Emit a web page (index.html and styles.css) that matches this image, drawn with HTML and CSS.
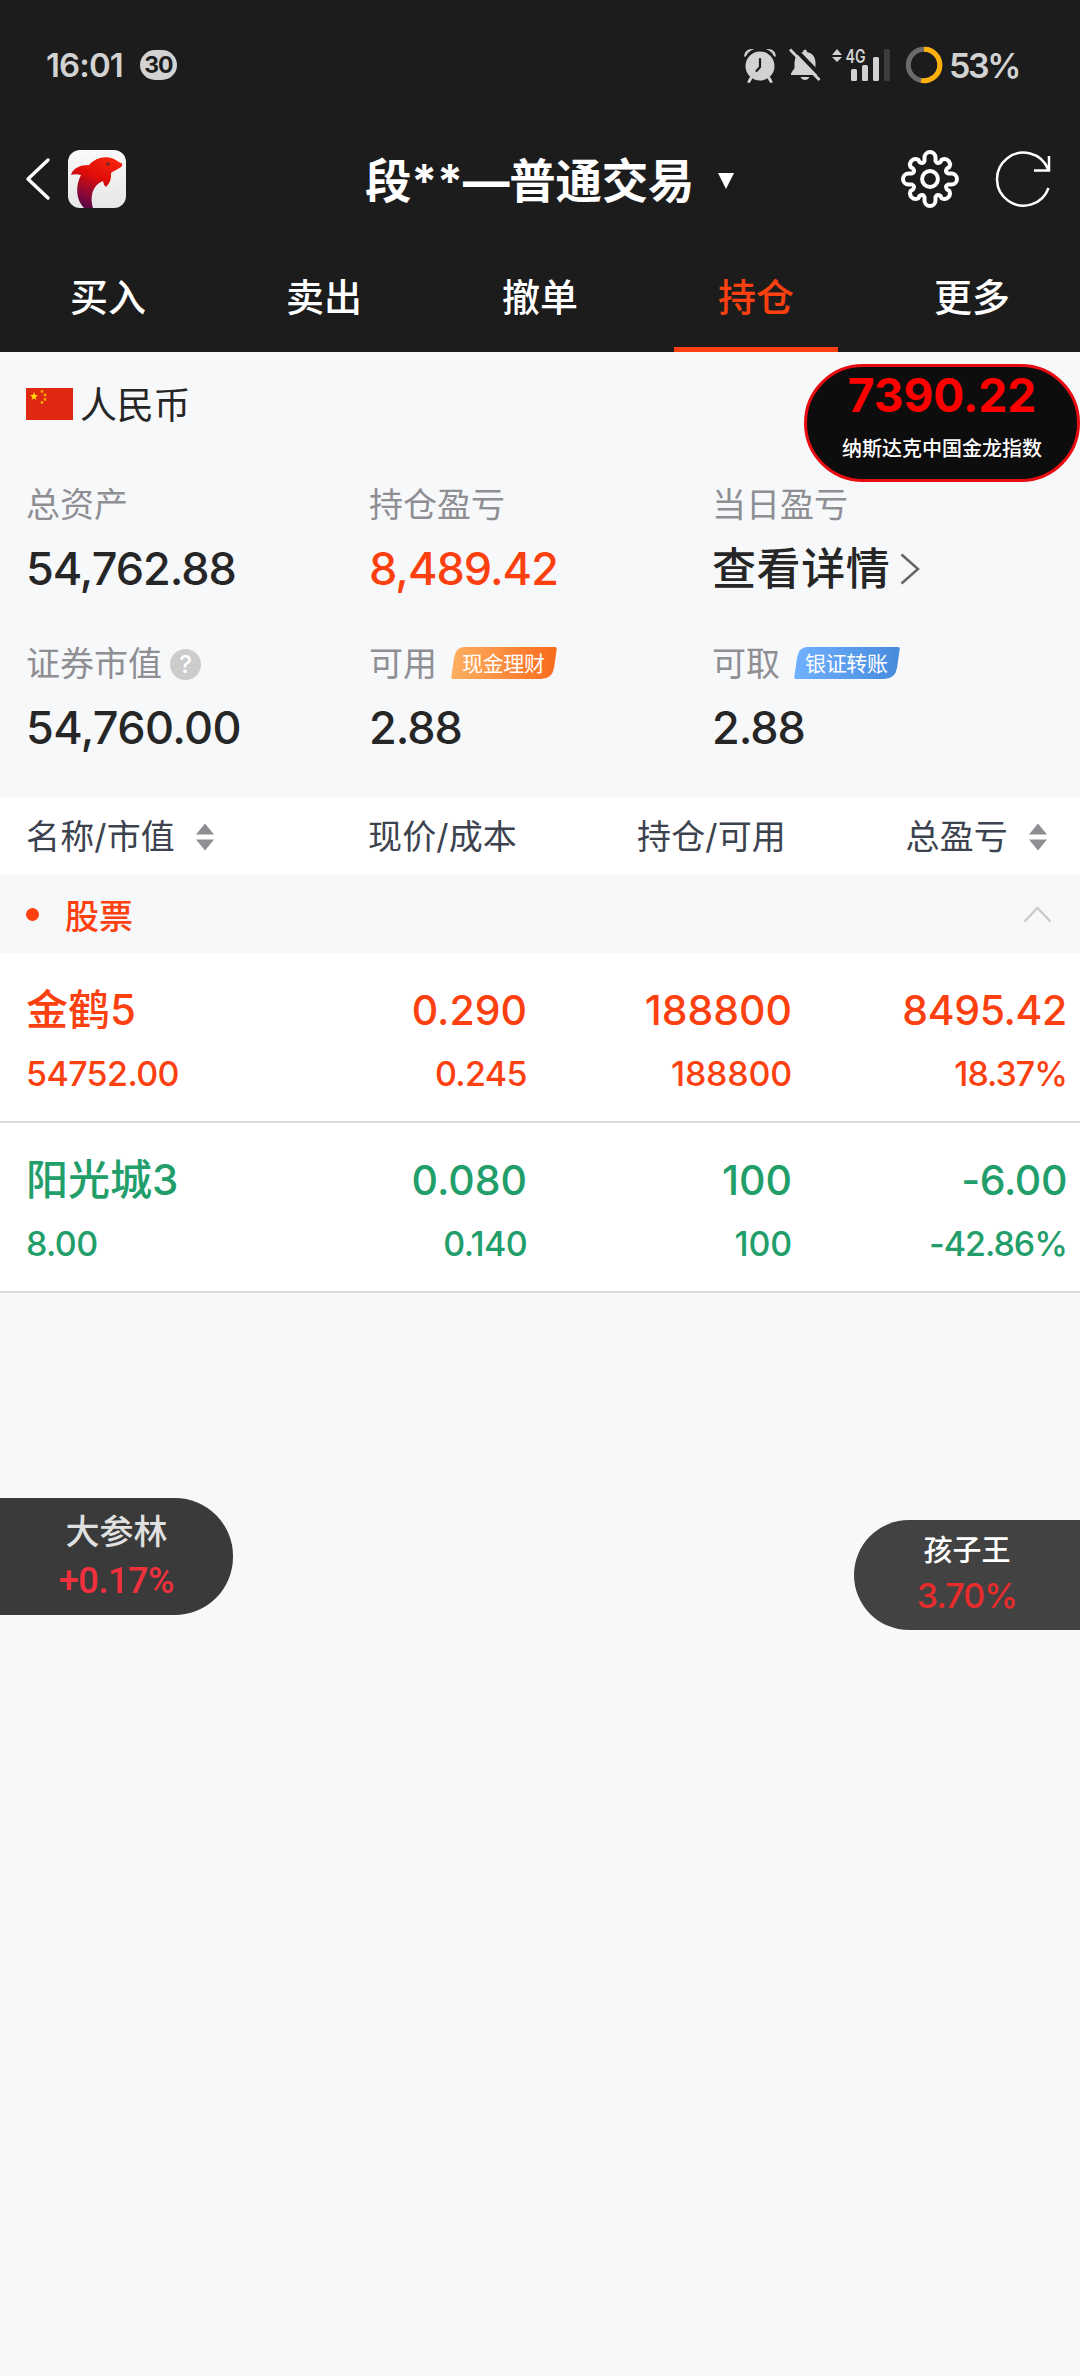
FILE: index.html
```html
<!DOCTYPE html>
<html lang="zh-CN">
<head>
<meta charset="utf-8">
<title>普通交易</title>
<link rel="stylesheet" href="styles.css">
</head>
<body>
<header class="top">
  <div class="status">
    <div class="status-left"><span class="clock">16:01</span><span class="count">30</span></div>
    <div class="status-right">
      <svg class="alarm" width="34" height="36" viewBox="0 0 34 36"><g fill="#d2d2d2"><circle cx="17" cy="19" r="14.500"/><path d="M1 9.500Q1.500 1 11 2Q4.500 4.500 3 9.500Z"/><path d="M33 9.500Q32.500 1 23 2Q29.500 4.500 31 9.500Z"/></g><path d="M8 31L6 34.500M26 31L28 34.500" stroke="#d2d2d2" stroke-width="3" stroke-linecap="round"/><path d="M17 12V20L13.500 24" fill="none" stroke="#1c1c1c" stroke-width="2.200" stroke-linecap="round"/></svg>
      <svg class="bell" width="32" height="34" viewBox="0 0 32 34"><path d="M16 1.500Q18 1.500 18 4Q26 5.500 26.500 14V20L30 25.500V27H2V25.500L5.500 20V14Q6 5.500 14 4Q14 1.500 16 1.500ZM11.500 29H20.500Q19 32 16 32Q13 32 11.500 29Z" fill="#d2d2d2"/><path d="M4 -1L34 30" stroke="#1c1c1c" stroke-width="4"/><path d="M1 1.500L30.500 32" stroke="#d2d2d2" stroke-width="2.800"/></svg>
      <svg class="signal" width="60" height="36" viewBox="0 0 60 36"><g fill="#d2d2d2"><path d="M5 2L10 8H0ZM5 15L0 10H10Z"/><text class="net" x="13.500" y="16" textLength="20" lengthAdjust="spacingAndGlyphs">4G</text><rect x="19" y="22" width="6" height="12" rx="1.500"/><rect x="30" y="18" width="6" height="16" rx="1.500"/><rect x="41" y="10" width="6" height="24" rx="1.500"/></g><rect x="52" y="2" width="6" height="32" rx="1.500" fill="#3c3c3c"/></svg>
      <svg class="ring" width="38" height="38" viewBox="0 0 38 38"><circle cx="19" cy="19" r="15.700" fill="none" stroke="#6b6b6b" stroke-width="5"/><path d="M19 3.300A15.700 15.700 0 1 1 16.100 34.400" fill="none" stroke="#ffb10a" stroke-width="5"/></svg>
      <span class="pct">53%</span>
    </div>
  </div>
  <div class="bar">
    <svg class="back" width="26" height="44" viewBox="0 0 26 44"><path d="M23 3L3 22L23 41" fill="none" stroke="#fff" stroke-width="3.400" stroke-linecap="round" stroke-linejoin="round"/></svg>
    <svg class="logo" width="58" height="58" viewBox="0 0 58 58"><defs><linearGradient id="lg" x1=".7" y1="0" x2=".3" y2="1"><stop offset="0" stop-color="#f5230c"/><stop offset=".4" stop-color="#df0c08"/><stop offset=".75" stop-color="#8d0835"/><stop offset="1" stop-color="#5a0545"/></linearGradient><linearGradient id="bg" x1="0" y1="0" x2="0" y2="1"><stop offset="0" stop-color="#fafafa"/><stop offset="1" stop-color="#e6e6e6"/></linearGradient></defs><rect width="58" height="58" rx="12" fill="url(#bg)"/><path d="M3 25C5 18 12 15 21 15C27 8 37 5 46 9C49 11 51 12 54 13.500Q55 16 51.500 18C48 20.500 45 21 43 23Q44 31 38 37Q35.500 35 35 31C27 34 21 43 25 58H16C8 50 7 36 13 25Q7 23.500 3 25Z" fill="url(#lg)"/><circle cx="40" cy="14" r="1.800" fill="#6d2a28"/></svg>
    <div class="title"><span>段**—普通交易</span><i class="caret"></i></div>
    <svg class="gear" width="60" height="60" viewBox="-30 -30 60 60"><circle r="7.900" fill="none" stroke="#fff" stroke-width="4"/><path fill="none" stroke="#fff" stroke-width="4" stroke-linejoin="round" d="M-5.500 -18V-21.500A5.500 5.500 0 0 1 5.500 -21.500V-18Q7 -14.500 10.500 -17L11.700 -19.200A5.500 5.500 0 0 1 19.200 -11.700L17 -10.500Q14.500 -7 18 -5.500H21.500A5.500 5.500 0 0 1 21.500 5.500H18Q14.500 7 17 10.500L19.200 11.700A5.500 5.500 0 0 1 11.700 19.200L10.500 17Q7 14.500 5.500 18V21.500A5.500 5.500 0 0 1 -5.500 21.500V18Q-7 14.500 -10.500 17L-11.700 19.200A5.500 5.500 0 0 1 -19.200 11.700L-17 10.500Q-14.500 7 -18 5.500H-21.500A5.500 5.500 0 0 1 -21.500 -5.500H-18Q-14.500 -7 -17 -10.500L-19.200 -11.700A5.500 5.500 0 0 1 -11.700 -19.200L-10.500 -17Q-7 -14.500 -5.500 -18Z"/></svg>
    <svg class="reload" width="58" height="58" viewBox="0 0 58 58"><path d="M53.500 38A26.500 26.500 0 1 1 53 19M54 6V20.500H39" fill="none" stroke="#fff" stroke-width="2.500"/></svg>
  </div>
  <nav class="tabs"><span>买入</span><span>卖出</span><span>撤单</span><span class="on">持仓</span><span>更多</span></nav>
</header>
<section class="summary">
  <div class="currency">
    <svg width="47" height="32" viewBox="0 0 47 32"><rect width="47" height="32" fill="#de2910"/><path d="M8 4L9 7H12L9.600 8.900L10.500 12L8 10.200L5.500 12L6.400 8.900L4 7H7Z" fill="#ffde00"/><g fill="#f5a800"><circle cx="16" cy="3.500" r="1.400"/><circle cx="19" cy="7" r="1.400"/><circle cx="19" cy="11.500" r="1.400"/><circle cx="16" cy="14.500" r="1.400"/></g></svg>
    <span>人民币</span>
  </div>
  <div class="grid">
    <div class="cell"><div class="label">总资产</div><div class="num">54,762.88</div></div>
    <div class="cell"><div class="label">持仓盈亏</div><div class="num red">8,489.42</div></div>
    <div class="cell"><div class="label">当日盈亏</div><div class="num detail">查看详情<svg width="20" height="32" viewBox="0 0 20 32"><path d="M1.500 1.500L18 16L1.500 30.500" fill="none" stroke="#666" stroke-width="2.500"/></svg></div></div>
    <div class="cell"><div class="label">证券市值<b class="help">?</b></div><div class="num wide">54,760.00</div></div>
    <div class="cell"><div class="label">可用<svg class="tag" width="106" height="32" viewBox="0 0 106 32"><defs><linearGradient id="o"><stop stop-color="#fdb060"/><stop offset="1" stop-color="#f96a1c"/></linearGradient></defs><path d="M13 0H104Q106 0 105.700 2L103 21Q101 32 90 32H2Q0 32 .300 30L3 11Q5 0 13 0Z" fill="url(#o)"/><text x="11" y="23.500" textLength="83">现金理财</text></svg></div><div class="num">2.88</div></div>
    <div class="cell"><div class="label">可取<svg class="tag" width="106" height="32" viewBox="0 0 106 32"><defs><linearGradient id="b"><stop stop-color="#70b0ff"/><stop offset="1" stop-color="#478bdc"/></linearGradient></defs><path d="M13 0H104Q106 0 105.700 2L103 21Q101 32 90 32H2Q0 32 .300 30L3 11Q5 0 13 0Z" fill="url(#b)"/><text x="11" y="23.500" textLength="83">银证转账</text></svg></div><div class="num">2.88</div></div>
  </div>
</section>
<section class="holdings">
  <div class="row head"><div class="first">名称/市值<i class="sort"></i></div><div>现价/成本</div><div>持仓/可用</div><div class="last">总盈亏<i class="sort"></i></div></div>
  <div class="group"><i class="dot"></i><span>股票</span><svg width="29" height="17" viewBox="0 0 29 17"><path d="M1.500 15.500L14.500 2L27.500 15.500" fill="none" stroke="#ccc" stroke-width="2.500"/></svg></div>
  <div class="row stock up"><div><p class="name">金鹤5</p><small>54752.00</small></div><div><p>0.290</p><small>0.245</small></div><div><p>188800</p><small class="qty">188800</small></div><div><p class="gain">8495.42</p><small class="rate">18.37%</small></div></div>
  <div class="row stock down"><div><p class="name">阳光城3</p><small>8.00</small></div><div><p>0.080</p><small>0.140</small></div><div><p>100</p><small class="qty">100</small></div><div><p class="gain">-6.00</p><small class="rate">-42.86%</small></div></div>
</section>
<aside class="float index"><b>7390.22</b><span>纳斯达克中国金龙指数</span></aside>
<aside class="float left"><span>大参林</span><b>+0.17%</b></aside>
<aside class="float right"><span>孩子王</span><b>3.70%</b></aside>
</body>
</html>
```

FILE: styles.css
```css
*{box-sizing:border-box}
body{margin:0;width:1080px;height:2376px;position:relative;overflow:hidden;background:#f7f8fa;color:#262626;font-family:Inter,"Noto Sans CJK SC",sans-serif;font-weight:500}
p,small,i,b{margin:0;font-style:normal;font-weight:500}
svg{display:block;flex:none;overflow:visible}
.top{height:352px;background:#1c1c1c;color:#fff}
.status{height:130px;padding:0 63px 0 46px;display:flex;justify-content:space-between;align-items:center;color:#d2d2d2}
.status-left,.status-right{display:flex;align-items:center}
.clock{font-size:33px;letter-spacing:-.9px;font-weight:600}
.count{margin-left:17px;width:37px;height:30px;border-radius:15px;background:#d2d2d2;color:#1c1c1c;font-size:23px;font-weight:700;line-height:30px;text-align:center;letter-spacing:-1px}
.bell{margin-left:12px}
.signal{margin-left:11px}
.net{font:600 18px Inter,sans-serif}
.ring{margin-left:13px}
.pct{width:68px;font-size:34px;margin-left:6px;font-weight:600;letter-spacing:-2.4px;white-space:nowrap}
.bar{height:98px;padding:0 27px 0 25px;display:flex;align-items:center}
.logo{margin-left:17px}
.title{flex:1;display:flex;align-items:center;padding-left:239px;font-size:46.5px;font-weight:700;line-height:98px;white-space:nowrap}
.title span{margin-top:3px;letter-spacing:-.2px}
.caret{margin:4px 0 0 24px;border:8px solid transparent;border-top:16px solid #fff;border-bottom:0}
.reload{margin-left:35px}
.tabs{height:124px;display:grid;grid-template-columns:repeat(5,1fr)}
.tabs span{font-size:38px;line-height:138px;text-align:center;height:124px}
.tabs .on{color:#fc400f;width:164px;justify-self:center;border-bottom:5px solid #fc400f}
.summary{height:445px;padding-left:26px}
.currency{height:104px;display:flex;align-items:center;gap:7px;font-size:37px;font-weight:400}
.currency span{line-height:104px;margin-top:4px;letter-spacing:-.3px}
.grid{display:grid;grid-template-columns:343px 343px 1fr;grid-auto-rows:159px}
.label{height:98px;line-height:100px;font-size:34px;color:#8e8e93;display:flex;align-items:center;font-weight:400}
.num{font-size:45px;line-height:54px;margin-top:-12px;letter-spacing:-1px;white-space:nowrap}
.num.wide{letter-spacing:-.6px}
.red{color:#fc400f}
.num.detail{font-size:44px;letter-spacing:.6px;display:flex;align-items:center;gap:10px}
.help{width:31px;height:31px;margin-left:8px;border-radius:50%;background:#ccc;color:#fff;font-size:24px;line-height:31px;text-align:center}
.tag{margin-left:14px;margin-top:-2px}
.tag text{font-size:21px;fill:#fff}
.row{display:grid;grid-template-columns:300px 227px 265px 288px;background:#fff}
.row>div{text-align:right}
.row>div:first-child{text-align:left;padding-left:26px}
.row>div:last-child{padding-right:13px}
.head{height:78px;line-height:80px;font-size:34px;color:#3c434f;font-weight:400;letter-spacing:.15px}
.head>div:nth-child(2){padding-right:10px}
.head>div:nth-child(3){padding-right:6px}
.head .first,.head .last{display:flex;align-items:center}
.row.head>.last{justify-content:flex-end;padding-right:33px}
.sort{width:18px;height:27px;margin-left:21px;background:#8e8e93;clip-path:polygon(50% 0,100% 41%,0 41%,0 59%,100% 59%,50% 100%,0 59%,0 41%)}
.group{height:78px;display:flex;align-items:center;padding:0 28px 0 26px;color:#fc400f;font-size:34px}
.dot{width:13px;height:13px;border-radius:50%;background:#fc400f;margin-right:26px}
.group svg{margin-left:auto}
.stock{height:170px;border-bottom:2px solid #dcdcde}
.stock p{font-size:41px;line-height:50px;margin-top:32px}
.stock .name{font-size:42px}
.stock .gain{letter-spacing:-.4px}
.stock small{display:block;font-size:34px;line-height:42px;margin-top:18px;letter-spacing:-.6px}
.stock .qty{letter-spacing:-.2px}
.stock .rate{letter-spacing:-1px}
.up{color:#fc400f}
.down{color:#229e6b}
.float{position:absolute;display:flex;flex-direction:column;align-items:center;white-space:nowrap}
.index{left:804px;top:364px;width:276px;height:118px;border:3px solid #e60c12;border-radius:59px;background:#0d0d0d}
.index b{font-size:46px;line-height:54px;font-weight:700;color:#f00;margin-top:1px}
.index span{font-size:20px;line-height:30px;color:#fff;margin-top:12px}
.left{left:0;top:1498px;width:233px;height:117px;border-radius:0 58px 58px 0;background:#3a3a3a;color:#e0e0e0}
.left span{font-size:34px;line-height:40px;margin-top:14px}
.left b{font-family:Roboto,sans-serif;font-size:36px;line-height:40px;margin-top:9px;letter-spacing:-.4px;color:#f0303c}
.right{left:854px;top:1520px;width:226px;height:110px;border-radius:55px 0 0 55px;background:#424242;color:#fff}
.right span{font-size:29px;line-height:36px;margin-top:13px}
.right b{font-size:34px;line-height:40px;margin-top:7px;letter-spacing:-.9px;color:#e82c2c}
```
